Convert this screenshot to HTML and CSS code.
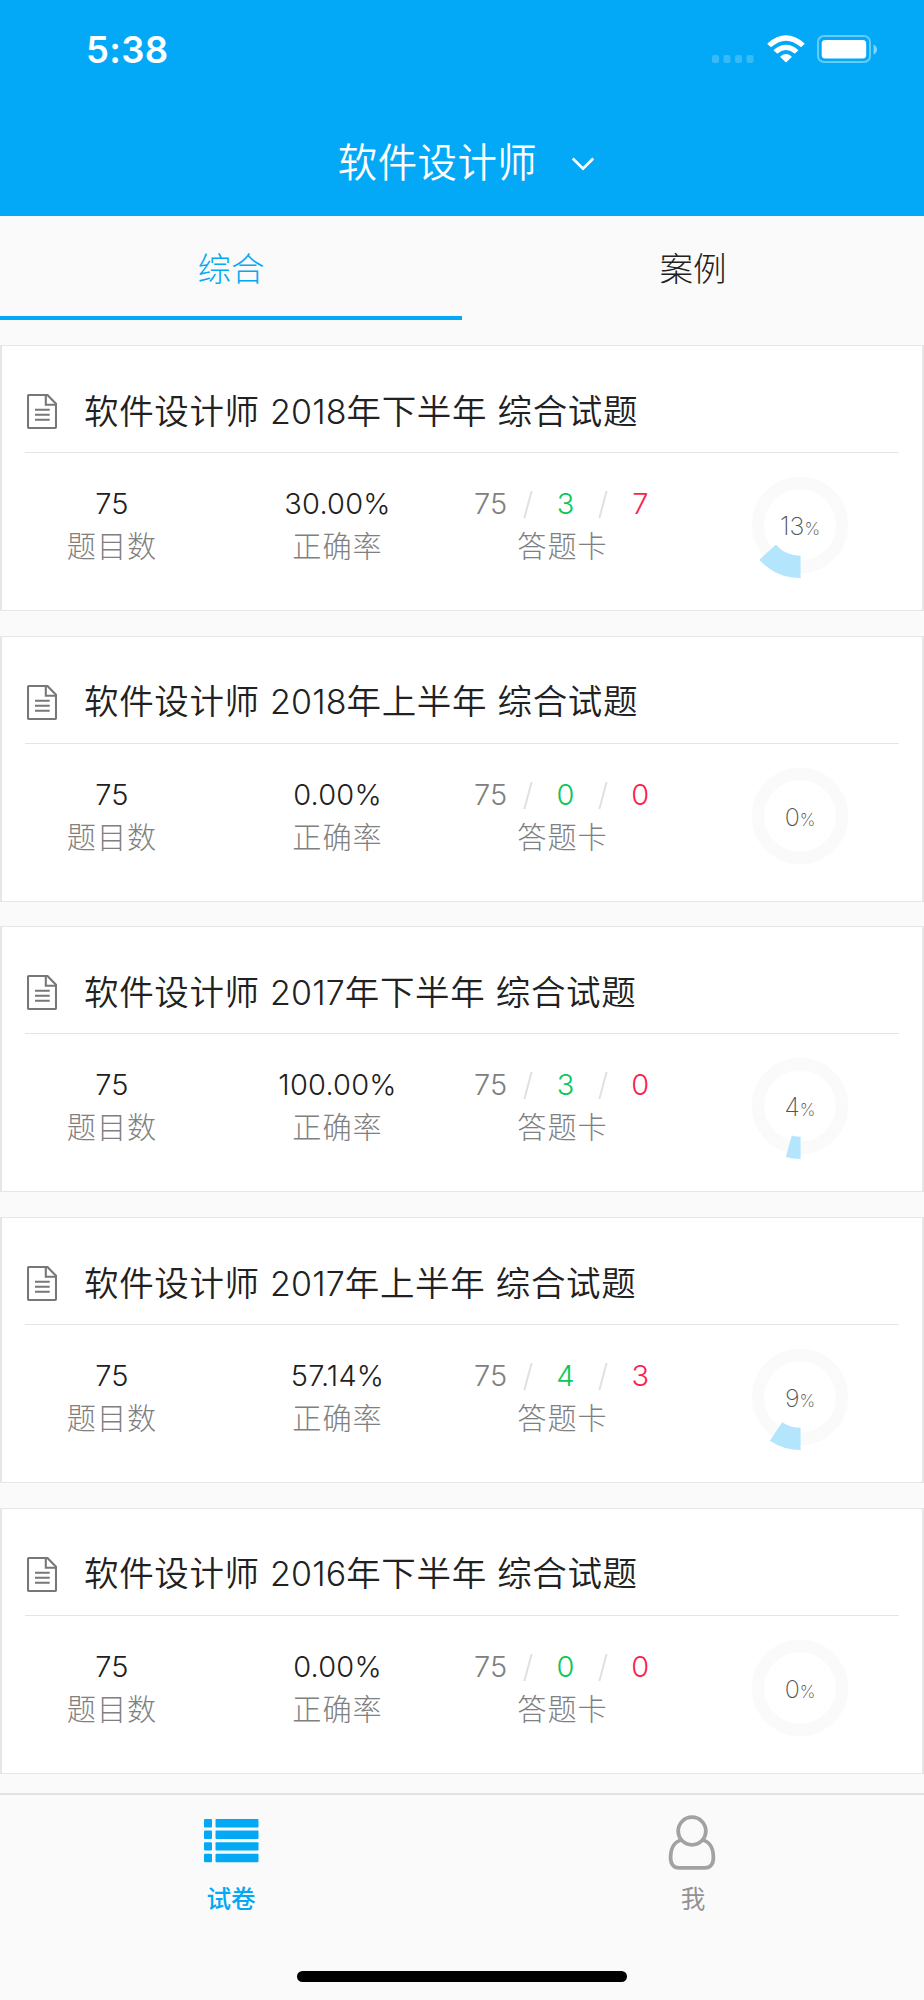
FILE: index.html
```html
<!DOCTYPE html>
<html lang="zh-CN">
<head>
  <meta charset="UTF-8">
  <meta name="viewport" content="width=device-width, initial-scale=1.0">
  <title>软件设计师</title>
  <link rel="stylesheet" href="styles.css">
</head>
<body>
  <header class="header">
    <div class="status-bar">
      <span class="time">5:38</span>
      <div class="status-icons">
        <svg class="signal" width="42" height="8" viewBox="0 0 42 8" fill="#fff">
          <rect x="0" y="0" width="7" height="8" rx="2"/>
          <rect x="11.5" y="0" width="7" height="8" rx="2"/>
          <rect x="23" y="0" width="7" height="8" rx="2"/>
          <rect x="34.5" y="0" width="7" height="8" rx="2"/>
        </svg>
        <svg class="wifi" width="38" height="28" viewBox="0 0 38 28" fill="#fff">
          <path d="M.7 8.2Q19-7.6 37.3 8.2Q37.8 8.8 37.3 9.3L34.5 11.8Q34 12.2 33.4 11.8Q19-.5 4.6 11.8Q4 12.2 3.5 11.8L.7 9.3Q.2 8.8 .7 8.2Z"/>
          <path d="M7 14.8Q19 4.6 31 14.8Q31.5 15.3 31 15.8L28.2 18.3Q27.7 18.7 27.1 18.3Q19 11.6 10.9 18.3Q10.3 18.7 9.8 18.3L7 15.8Q6.5 15.3 7 14.8Z"/>
          <path d="M13.6 21.2Q19 17 24.4 21.2Q24.9 21.7 24.4 22.2L19.6 27Q19 27.6 18.4 27L13.6 22.2Q13.1 21.7 13.6 21.2Z"/>
        </svg>
        <svg class="battery" width="60" height="28" viewBox="0 0 60 28">
          <rect x="1" y="1" width="52" height="26" rx="6" fill="none" stroke="#fff" stroke-opacity=".4" stroke-width="2"/>
          <rect x="4.7" y="5" width="44.5" height="18.5" rx="3.5" fill="#fff"/>
          <path d="M56.5 9.5Q60 11 60 14.5T56.5 19.5Z" fill="#fff" fill-opacity=".5"/>
        </svg>
      </div>
    </div>
    <div class="title-bar">
      <h1>软件设计师</h1>
      <svg class="chevron" width="24" height="14" viewBox="0 0 24 14" fill="none" stroke="#fff" stroke-width="2.7">
        <path d="M1.8 1.5L12 11.7L22.2 1.5"/>
      </svg>
    </div>
  </header>

  <nav class="tabs">
    <div class="tab active">综合</div>
    <div class="tab">案例</div>
  </nav>

  <!-- shared icon -->
  <svg class="defs">
    <symbol id="doc" viewBox="0 0 30 35">
      <g fill="none" stroke="#777" stroke-width="2.1">
        <path d="M2 1H20.5L29 9.8V33Q29 34 28 34H2Q1 34 1 33V2Q1 1 2 1Z"/>
        <path d="M18.8 1V10.7H29"/>
        <path d="M8 15.8H22.7M8 20.8H22.7M8 25.8H22.7"/>
      </g>
    </symbol>
  </svg>

  <main class="list">
    <section class="card">
      <div class="card-title"><svg class="doc"><use href="#doc"/></svg><h2>软件设计师 <span class="year">2018</span>年下半年 综合试题</h2></div>
      <div class="stats">
        <div class="stat"><b>75</b><span>题目数</span></div>
        <div class="stat"><b>30.00%</b><span>正确率</span></div>
        <div class="stat">
          <div class="answers"><i>75</i><s></s><i class="right">3</i><s></s><i class="wrong">7</i></div>
          <span>答题卡</span>
        </div>
        <div class="ring">
          <svg width="116" height="116" viewBox="-58 -58 116 116" fill="none">
            <circle r="42" stroke="#fafafa" stroke-width="12.4"/>
            <circle class="arc" cx=".6" cy="-2.5" r="44.4" pathLength="100" stroke-dasharray="13.33 100"/>
          </svg>
          <p>13<small>%</small></p>
        </div>
      </div>
    </section>

    <section class="card">
      <div class="card-title"><svg class="doc"><use href="#doc"/></svg><h2>软件设计师 <span class="year">2018</span>年上半年 综合试题</h2></div>
      <div class="stats">
        <div class="stat"><b>75</b><span>题目数</span></div>
        <div class="stat"><b>0.00%</b><span>正确率</span></div>
        <div class="stat">
          <div class="answers"><i>75</i><s></s><i class="right">0</i><s></s><i class="wrong">0</i></div>
          <span>答题卡</span>
        </div>
        <div class="ring">
          <svg width="116" height="116" viewBox="-58 -58 116 116" fill="none">
            <circle r="42" stroke="#fafafa" stroke-width="12.4"/>
          </svg>
          <p>0<small>%</small></p>
        </div>
      </div>
    </section>

    <section class="card">
      <div class="card-title"><svg class="doc"><use href="#doc"/></svg><h2>软件设计师 <span class="year">2017</span>年下半年 综合试题</h2></div>
      <div class="stats">
        <div class="stat"><b>75</b><span>题目数</span></div>
        <div class="stat"><b>100.00%</b><span>正确率</span></div>
        <div class="stat">
          <div class="answers"><i>75</i><s></s><i class="right">3</i><s></s><i class="wrong">0</i></div>
          <span>答题卡</span>
        </div>
        <div class="ring">
          <svg width="116" height="116" viewBox="-58 -58 116 116" fill="none">
            <circle r="42" stroke="#fafafa" stroke-width="12.4"/>
            <circle class="arc" cx=".6" cy="-2.5" r="44.4" pathLength="100" stroke-dasharray="4.3 100"/>
          </svg>
          <p>4<small>%</small></p>
        </div>
      </div>
    </section>

    <section class="card">
      <div class="card-title"><svg class="doc"><use href="#doc"/></svg><h2>软件设计师 <span class="year">2017</span>年上半年 综合试题</h2></div>
      <div class="stats">
        <div class="stat"><b>75</b><span>题目数</span></div>
        <div class="stat"><b>57.14%</b><span>正确率</span></div>
        <div class="stat">
          <div class="answers"><i>75</i><s></s><i class="right">4</i><s></s><i class="wrong">3</i></div>
          <span>答题卡</span>
        </div>
        <div class="ring">
          <svg width="116" height="116" viewBox="-58 -58 116 116" fill="none">
            <circle r="42" stroke="#fafafa" stroke-width="12.4"/>
            <circle class="arc" cx=".6" cy="-2.5" r="44.4" pathLength="100" stroke-dasharray="9.33 100"/>
          </svg>
          <p>9<small>%</small></p>
        </div>
      </div>
    </section>

    <section class="card">
      <div class="card-title"><svg class="doc"><use href="#doc"/></svg><h2>软件设计师 <span class="year">2016</span>年下半年 综合试题</h2></div>
      <div class="stats">
        <div class="stat"><b>75</b><span>题目数</span></div>
        <div class="stat"><b>0.00%</b><span>正确率</span></div>
        <div class="stat">
          <div class="answers"><i>75</i><s></s><i class="right">0</i><s></s><i class="wrong">0</i></div>
          <span>答题卡</span>
        </div>
        <div class="ring">
          <svg width="116" height="116" viewBox="-58 -58 116 116" fill="none">
            <circle r="42" stroke="#fafafa" stroke-width="12.4"/>
          </svg>
          <p>0<small>%</small></p>
        </div>
      </div>
    </section>
  </main>

  <footer class="footer">
    <div class="nav">
      <div class="nav-item active">
        <svg width="56" height="56" viewBox="0 0 56 56" fill="#03a9f4">
          <rect x="1" y="5" width="8" height="8.4" rx="1"/><rect x="12.5" y="5" width="43" height="8.4" rx="1"/>
          <rect x="1" y="16.6" width="8" height="8.4" rx="1"/><rect x="12.5" y="16.6" width="43" height="8.4" rx="1"/>
          <rect x="1" y="28.2" width="8" height="8.4" rx="1"/><rect x="12.5" y="28.2" width="43" height="8.4" rx="1"/>
          <rect x="1" y="39.8" width="8" height="8.4" rx="1"/><rect x="12.5" y="39.8" width="43" height="8.4" rx="1"/>
        </svg>
        <span>试卷</span>
      </div>
      <div class="nav-item">
        <svg width="56" height="56" viewBox="0 0 56 56" fill="none" stroke="#a2a2a2" stroke-width="3.8">
          <circle cx="27" cy="17" r="13.8"/>
          <path d="M16.5 26C9 27.5 5.6 35 5.6 44C5.6 50 9 53.8 14 53.8H40C45 53.8 48.4 50 48.4 44C48.4 35 45 27.5 37.5 26"/>
        </svg>
        <span>我</span>
      </div>
    </div>
    <div class="home-bar"></div>
  </footer>
</body>
</html>
```
FILE: styles.css
```css
* {
  box-sizing: border-box;
  margin: 0;
  padding: 0;
}

body {
  width: 924px;
  height: 2000px;
  display: flex;
  flex-direction: column;
  overflow: hidden;
  background: #fafafa;
  color: #212121;
  font-family: Inter, "Noto Sans CJK SC", sans-serif;
}

svg {
  display: block;
  flex: none;
}

.defs {
  display: none;
}

/* Header */
.header {
  height: 216px;
  background: #03a9f7;
  color: #fff;
}

.status-bar {
  height: 108px;
  padding: 28px 47px 0 86px;
  display: flex;
  justify-content: space-between;
}

.time {
  font-size: 36.5px;
  line-height: 44px;
  font-weight: 600;
  letter-spacing: .3px;
}

.status-icons {
  display: flex;
  align-items: flex-start;
  padding-top: 7px;
}

.signal {
  margin: 20px 13px 0 0;
  opacity: .2;
}

.wifi {
  margin-right: 12px;
}

.title-bar {
  display: flex;
  align-items: center;
  justify-content: center;
  height: 108px;
  padding: 0 0 0 9px;
}

h1 {
  font-size: 39.4px;
  line-height: 56px;
  font-weight: 350;
  letter-spacing: .5px;
  margin-top: 2px;
}

.chevron {
  margin: 4px 0 0 34px;
}

/* Tabs */
.tabs {
  display: flex;
  height: 104px;
}

.tab {
  flex: 1;
  font-size: 33.5px;
  line-height: 106px;
  font-weight: 300;
  text-align: center;
}

.tab.active {
  color: #03a9f4;
  border-bottom: 4px solid #03a9f4;
}

/* Paper cards */
.list {
  height: 1473px;
  padding-top: 25px;
  overflow: hidden;
}

.card {
  height: 266px;
  margin-bottom: 24.7px;
  background: #fff;
  border: 2px solid #e6e6e6;
  border-width: 1px 2px;
}

.card-title {
  display: flex;
  align-items: center;
  height: 107px;
  margin: 0 23px;
  padding: 25px 0 0 2px;
  border-bottom: 1px solid #e4e4e4;
}

.doc {
  width: 30px;
  height: 35px;
  margin-right: 27px;
}

h2 {
  font-size: 34.5px;
  line-height: 50px;
  font-weight: 350;
  letter-spacing: .65px;
  white-space: nowrap;
}

.year {
  font-size: 34px;
  letter-spacing: .1px;
}

.stats {
  display: grid;
  grid-template-columns: 220px 231px 219px 250px;
}

.stat {
  padding-top: 33px;
  text-align: center;
}

.stat b,
.answers {
  display: block;
  font-size: 29px;
  line-height: 36px;
  font-weight: 300;
}

.stat b {
  letter-spacing: .2px;
}

.stat span {
  display: block;
  margin-top: 3px;
  font-size: 29.2px;
  line-height: 44px;
  font-weight: 300;
  color: #808080;
  letter-spacing: .9px;
}

.answers {
  display: grid;
  grid-template-columns: repeat(5, 37.4px);
  margin-left: 19px;
  justify-items: center;
  color: #808080;
}

.answers i {
  font-style: normal;
}

.answers s {
  width: 2px;
  height: 27px;
  margin-top: 5px;
  background: #e0e0e0;
  transform: skewX(-15deg);
}

.answers .right {
  color: #0bc75b;
}

.answers .wrong {
  color: #fc1f4e;
}

.ring {
  display: grid;
  place-items: center;
  width: 116px;
  height: 116px;
  margin: 14px 0 0 70px;
}

.ring svg,
.ring p {
  grid-area: 1 / 1;
}

.ring p {
  margin-top: 2px;
  font-size: 25px;
  font-weight: 250;
  color: #555;
}

.ring small {
  font-size: 17.5px;
}

.arc {
  stroke: #b3e5fc;
  stroke-width: 22.2;
  transform: rotate(90deg);
  transform-origin: .6px -2.5px;
}

/* Bottom bar */
.footer {
  height: 207px;
  border-top: 2px solid #e2e2e2;
}

.nav {
  display: flex;
  height: 176px;
}

.nav-item {
  flex: 1;
  display: flex;
  flex-direction: column;
  align-items: center;
  padding-top: 19px;
  font-size: 24.6px;
  line-height: 36px;
  color: #929292;
}

.nav-item span {
  margin-top: 11px;
}

.nav-item.active {
  color: #03a9f4;
  font-weight: 500;
}

.home-bar {
  width: 330px;
  height: 11px;
  margin: 0 auto;
  border-radius: 6px;
  background: #000;
}
```
